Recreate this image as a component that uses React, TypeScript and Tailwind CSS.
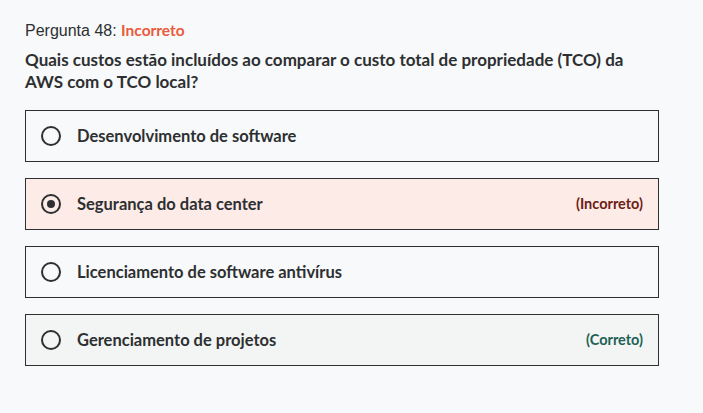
import React from "react";

type Opt = { text: string; state?: "incorrect" | "correct"; selected?: boolean };

const options: Opt[] = [
  { text: "Desenvolvimento de software" },
  { text: "Segurança do data center", state: "incorrect", selected: true },
  { text: "Licenciamento de software antivírus" },
  { text: "Gerenciamento de projetos", state: "correct" },
];

function Radio({ selected }: { selected?: boolean }) {
  return (
    <span className="flex h-[20px] w-[20px] shrink-0 items-center justify-center rounded-full border-2 border-[#2d2f31]">
      {selected && <span className="h-[8px] w-[8px] rounded-full bg-[#2d2f31]" />}
    </span>
  );
}

export default function App() {
  return (
    <div
      className="min-h-[413px] w-full bg-[#f7f9fa] pl-[25px] pt-[20px] text-[#2d2f31]"
      style={{ fontFamily: "Lato, 'Noto Sans', sans-serif" }}
    >
      <div className="text-[16px] leading-[20px]" style={{ fontFamily: "'Liberation Sans', Arial, sans-serif" }}>
        Pergunta 48:{" "}
        <span className="text-[15.5px] font-bold text-[#ea5a3d]" style={{ fontFamily: "Lato, sans-serif" }}>
          Incorreto
        </span>
      </div>
      <div className="mt-[8px] w-[630px] text-[17px] font-bold leading-[22px]">
        Quais custos estão incluídos ao comparar o custo total de propriedade (TCO) da AWS com o TCO local?
      </div>
      <div className="mt-[17px] flex w-[634px] flex-col gap-[16px]">
        {options.map((o) => (
          <div
            key={o.text}
            className={
              "flex h-[52px] items-center border border-[#2d2f31] pl-[15px] pr-[15px] " +
              (o.state === "incorrect"
                ? "bg-[#fcebe7]"
                : o.state === "correct"
                ? "bg-[#f2f5f3]"
                : "bg-[#f7f9fa]")
            }
          >
            <Radio selected={o.selected} />
            <span className="ml-[16px] flex-1 text-[16.5px] font-bold leading-[22px]">{o.text}</span>
            {o.state === "incorrect" && (
              <span className="text-[14.5px] font-bold text-[#6d2115]">(Incorreto)</span>
            )}
            {o.state === "correct" && (
              <span className="text-[14.5px] font-bold text-[#1e6055]">(Correto)</span>
            )}
          </div>
        ))}
      </div>
    </div>
  );
}
